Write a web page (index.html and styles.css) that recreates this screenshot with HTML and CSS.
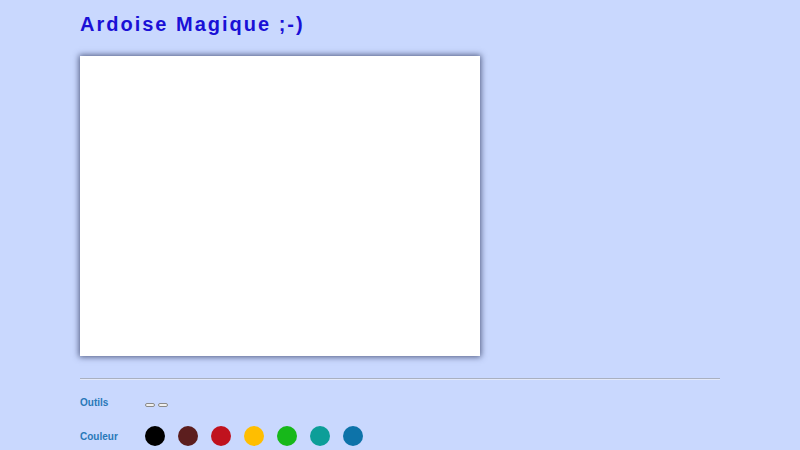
FILE: index.html
```html
<!DOCTYPE html>
<html lang="fr">
<head>
<meta charset="utf-8">
<title>Ardoise Magique</title>
<link rel="stylesheet" href="styles.css">
</head>
<body>
<div class="page">
  <h1 class="title">Ardoise Magique ;-)</h1>
  <div class="board"></div>
  <hr class="divider">
  <div class="row tools-row">
    <span class="label">Outils</span>
    <div class="tools">
      <button class="tool"></button>
      <button class="tool"></button>
    </div>
  </div>
  <div class="row colors-row">
    <span class="label">Couleur</span>
    <div class="colors">
      <span class="swatch c-black"></span>
      <span class="swatch c-brown"></span>
      <span class="swatch c-red"></span>
      <span class="swatch c-yellow"></span>
      <span class="swatch c-green"></span>
      <span class="swatch c-teal"></span>
      <span class="swatch c-blue"></span>
    </div>
  </div>
</div>
</body>
</html>
```
FILE: styles.css
```css
html, body {
  margin: 0;
  padding: 0;
  background: #c9d8fe;
  font-family: "Liberation Sans", Arial, sans-serif;
  overflow: hidden;
}
.page {
  width: 640px;
  margin-left: 80px;
  padding-top: 12px;
}
.title {
  margin: 0;
  font-size: 20px;
  line-height: 24px;
  font-weight: bold;
  letter-spacing: 2px;
  color: #1a10d6;
}
.board {
  margin-top: 20px;
  width: 400px;
  height: 300px;
  background: #fff;
  box-shadow: 0 0 6px 1px rgba(40, 50, 90, 0.75);
}
.divider {
  margin: 22px 0 0 0;
  border: 0;
  border-top: 1px solid #a9b0c0;
  border-bottom: 1px solid #e3e9fa;
  height: 0;
}
.row {
  display: flex;
  align-items: center;
}
.label {
  width: 65px;
  font-size: 10px;
  font-weight: bold;
  color: #2a78b8;
}
.tools-row {
  margin-top: 15px;
  height: 14px;
}
.tools {
  display: flex;
  gap: 3px;
  padding-top: 6px;
}
.tool {
  width: 10px;
  height: 4px;
  padding: 0;
  border: 1px solid #8a8a8a;
  border-radius: 2px;
  background: #efefef;
}
.colors-row {
  margin-top: 16px;
  height: 22px;
}
.colors {
  display: flex;
  gap: 13px;
}
.swatch {
  width: 20px;
  height: 20px;
  border-radius: 50%;
  display: block;
}
.c-black { background: #000000; }
.c-brown { background: #5c1e1e; }
.c-red { background: #c0121e; }
.c-yellow { background: #ffbe00; }
.c-green { background: #17b81a; }
.c-teal { background: #0c9e98; }
.c-blue { background: #0d73a9; }
```
